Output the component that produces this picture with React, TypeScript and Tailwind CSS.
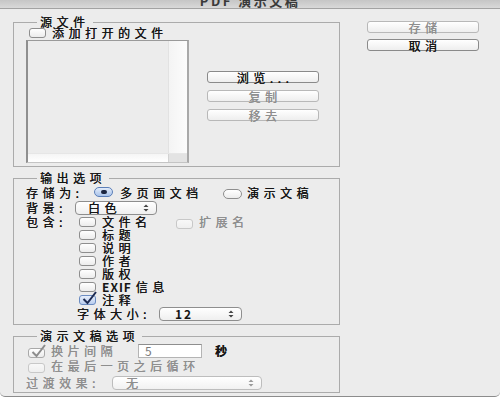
import React from "react";

const ink = "text-[#151515]";
const dim = "text-[#8e8e8e]";
const cjk =
  "text-[12px] tracking-[4.5px] leading-[11px] whitespace-nowrap [text-shadow:0.35px_0_0_currentColor]";

function Box({ checked, disabled }: { checked?: boolean; disabled?: boolean }) {
  const tone = checked
    ? disabled
      ? "border-[#a9a9a9] from-white to-[#ececec]"
      : "border-[#6b8cc2] from-[#e8effb] to-[#b9cdee]"
    : disabled
    ? "border-[#c8c8c8] from-[#f8f8f8] to-[#efefef]"
    : "border-[#8e8e8e] from-white to-[#ececec]";
  return (
    <span
      className={`relative inline-flex w-[17px] h-[10px] shrink-0 rounded-[3px] border bg-gradient-to-b ${tone}`}
    >
      {checked && (
        <svg
          className="absolute left-[2px] -top-[5px]"
          width="15"
          height="14"
          viewBox="0 0 15 14"
        >
          <path
            d="M1.5 8 L5.5 12 L14 1"
            fill="none"
            stroke={disabled ? "#8c8c8c" : "#1d2b52"}
            strokeWidth="2"
          />
        </svg>
      )}
    </span>
  );
}

function Radio({ on }: { on?: boolean }) {
  return (
    <span
      className={`inline-flex items-center justify-center w-[19px] h-[10px] shrink-0 rounded-full border bg-gradient-to-b ${
        on
          ? "border-[#5b7fb9] from-[#e2ebf9] to-[#a9c3ea]"
          : "border-[#8e8e8e] from-white to-[#ececec]"
      }`}
    >
      {on && <span className="w-[6px] h-[4px] rounded-full bg-[#1b2540]" />}
    </span>
  );
}

function UpDown({ color }: { color: string }) {
  return (
    <svg width="6" height="8" viewBox="0 0 6 8">
      <path d="M0.5 3 L3 0.6 L5.5 3 Z M0.5 5 L3 7.4 L5.5 5 Z" fill={color} />
    </svg>
  );
}

function Btn({ label, off }: { label: string; off?: boolean }) {
  return (
    <div
      className={`flex items-center justify-center w-[112px] h-[12px] rounded-[3px] border bg-gradient-to-b from-white to-[#eeeeee] ${
        off ? "border-[#b8b8b8] " + dim : "border-[#8a8a8a] " + ink
      } ${cjk}`}
    >
      <span className="pl-[4px]">{label}</span>
    </div>
  );
}

function Legend({ children }: { children: React.ReactNode }) {
  return (
    <legend
      className={`ml-[11px] px-[3px] ${ink} text-[12px] tracking-[4.5px] leading-[10px] [text-shadow:0.35px_0_0_currentColor]`}
    >
      {children}
    </legend>
  );
}

export default function App() {
  return (
    <div className="w-[500px] h-[400px] bg-white font-['Noto_Sans_CJK_SC',sans-serif]">
      <div className="h-[397px] bg-[#ececec] rounded-b-[5px] border-b border-[#8c8c8c] overflow-hidden">
        {/* title bar */}
        <div className="h-[9px] overflow-hidden border-b border-[#a3a3a3] bg-gradient-to-b from-[#c6c6c6] to-[#d9d9d9] flex justify-center">
          <span className="-mt-[6px] text-[13px] leading-[13px] tracking-[2.5px] text-[#3a3a3a] font-bold whitespace-nowrap">
            PDF 演示文稿
          </span>
        </div>

        <div className="flex pl-[13px]">
          <div className="w-[327px] flex flex-col pt-[8px]">
            {/* 源文件 */}
            <fieldset className="border border-[#ababab] px-[12px] pb-[3px]">
              <Legend>源文件</Legend>
              <div className="ml-[3px] h-[11px] flex items-center gap-[6px]">
                <Box />
                <span className={`${cjk} ${ink}`}>添加打开的文件</span>
              </div>
              <div className="mt-[2px] flex">
                <div className="w-[163px] h-[123px] flex flex-col border-l-2 border-t border-r-2 border-b border-l-[#8f8f8f] border-t-[#9a9a9a] border-r-[#a9a9a9] border-b-[#c4c4c4]">
                  <div className="flex flex-1">
                    <div className="flex-1 bg-[#ececec]" />
                    <div className="w-[19px] border-l border-[#e2e2e2] bg-gradient-to-r from-[#f4f4f4] to-[#fcfcfc]" />
                  </div>
                  <div className="h-[9px] flex border-t border-[#e6e6e6]">
                    <div className="flex-1 bg-gradient-to-b from-[#f5f5f5] to-white" />
                    <div className="w-[19px] bg-[#e3e3e3] border-l border-[#d2d2d2]" />
                  </div>
                </div>
                <div className="ml-[18px] pt-[31px] flex flex-col gap-[7px]">
                  <Btn label="浏览..." />
                  <Btn label="复制" off />
                  <Btn label="移去" off />
                </div>
              </div>
            </fieldset>

            {/* 输出选项 */}
            <fieldset className="mt-[6px] border border-[#ababab] px-[12px] pb-[3px]">
              <Legend>输出选项</Legend>
              <div className="mt-[2px] h-[14px] flex items-center">
                <span className={`w-[68px] ${cjk} ${ink}`}>存储为:</span>
                <Radio on />
                <span className={`ml-[7px] w-[85px] ${cjk} ${ink}`}>多页面文档</span>
                <span className="ml-[18px]">
                  <Radio />
                </span>
                <span className={`ml-[5px] ${cjk} ${ink}`}>演示文稿</span>
              </div>
              <div className="mt-[1px] h-[15px] flex items-center">
                <span className={`w-[49px] ${cjk} ${ink}`}>背景:</span>
                <div className="w-[82px] h-[14px] flex items-center justify-between pl-[12px] pr-[7px] rounded-[4px] border border-[#8e8e8e] bg-gradient-to-b from-white to-[#efefef]">
                  <span className={`${cjk} ${ink}`}>白色</span>
                  <UpDown color="#444" />
                </div>
              </div>
              <div className="h-[13px] flex items-center">
                <span className={`w-[53px] ${cjk} ${ink}`}>包含:</span>
                <Box />
                <span className={`ml-[6px] w-[51px] ${cjk} ${ink}`}>文件名</span>
                <span className="ml-[23px]">
                  <Box disabled />
                </span>
                <span className={`ml-[6px] ${cjk} ${dim}`}>扩展名</span>
              </div>
              {["标题", "说明", "作者", "版权"].map((t) => (
                <div key={t} className="h-[13px] flex items-center pl-[53px]">
                  <Box />
                  <span className={`ml-[6px] ${cjk} ${ink}`}>{t}</span>
                </div>
              ))}
              <div className="h-[13px] flex items-center pl-[53px]">
                <Box />
                <span className={`ml-[6px] text-[12px] leading-[11px] whitespace-nowrap font-bold tracking-[1px] ${ink}`}>
                  EXIF{" "}
                  <span className="tracking-[4.5px] font-normal [text-shadow:0.35px_0_0_currentColor]">信息</span>
                </span>
              </div>
              <div className="h-[13px] flex items-center pl-[53px]">
                <Box checked />
                <span className={`ml-[6px] ${cjk} ${ink}`}>注释</span>
              </div>
              <div className="h-[15px] flex items-center pl-[51px]">
                <span className={`w-[82px] ${cjk} ${ink}`}>字体大小:</span>
                <div className="w-[83px] h-[14px] flex items-center justify-between pl-[15px] pr-[7px] rounded-[4px] border border-[#8e8e8e] bg-gradient-to-b from-white to-[#efefef]">
                  <span className={`text-[12px] leading-[11px] font-bold tracking-[2px] ${ink}`}>12</span>
                  <UpDown color="#444" />
                </div>
              </div>
            </fieldset>

            {/* 演示文稿选项 */}
            <fieldset className="mt-[6px] border border-[#ababab] px-[12px] pb-[2px]">
              <Legend>演示文稿选项</Legend>
              <div className="mt-[2px] h-[15px] flex items-center">
                <span className="ml-[2px]">
                  <Box checked disabled />
                </span>
                <span className={`ml-[6px] w-[87px] ${cjk} ${dim}`}>换片间隔</span>
                <div className="w-[64px] h-[14px] flex items-center pl-[6px] bg-white border border-[#b4b4b4] border-t-[#8e8e8e]">
                  <span className="text-[12px] leading-[11px] text-[#7a7a7a]">5</span>
                </div>
                <span className={`ml-[13px] ${cjk} ${ink} font-bold`}>秒</span>
              </div>
              <div className="mt-[1px] h-[13px] flex items-center">
                <span className="ml-[2px]">
                  <Box disabled />
                </span>
                <span className={`ml-[6px] ${cjk} ${dim}`}>在最后一页之后循环</span>
              </div>
              <div className="mt-[3px] h-[15px] flex items-center">
                <span className={`w-[86px] ${cjk} ${dim}`}>过渡效果:</span>
                <div className="w-[150px] h-[14px] flex items-center justify-between pl-[13px] pr-[7px] rounded-[4px] border border-[#bdbdbd] bg-gradient-to-b from-white to-[#f1f1f1]">
                  <span className={`${cjk} ${dim}`}>无</span>
                  <UpDown color="#9a9a9a" />
                </div>
              </div>
            </fieldset>
          </div>

          {/* right buttons */}
          <div className="ml-[27px] pt-[12px] flex flex-col gap-[6px]">
            <Btn label="存储" off />
            <Btn label="取消" />
          </div>
        </div>
      </div>
    </div>
  );
}
